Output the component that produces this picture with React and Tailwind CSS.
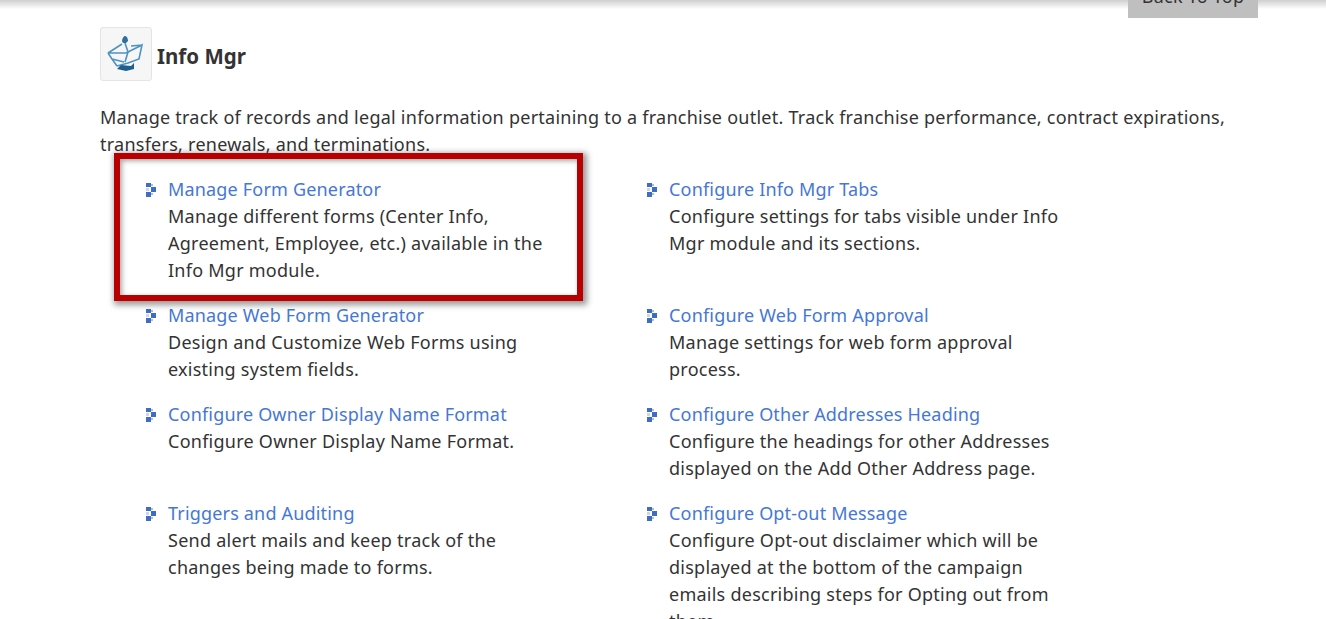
const ITEMS = [
  ["Manage Form Generator", ["Manage different forms (Center Info,", "Agreement, Employee, etc.) available in the", "Info Mgr module."]],
  ["Configure Info Mgr Tabs", ["Configure settings for tabs visible under Info", "Mgr module and its sections."]],
  ["Manage Web Form Generator", ["Design and Customize Web Forms using", "existing system fields."]],
  ["Configure Web Form Approval", ["Manage settings for web form approval", "process."]],
  ["Configure Owner Display Name Format", ["Configure Owner Display Name Format."]],
  ["Configure Other Addresses Heading", ["Configure the headings for other Addresses", "displayed on the Add Other Address page."]],
  ["Triggers and Auditing", ["Send alert mails and keep track of the", "changes being made to forms."]],
  ["Configure Opt-out Message", ["Configure Opt-out disclaimer which will be", "displayed at the bottom of the campaign", "emails describing steps for Opting out from", "them."]],
];

function Bullet() {
  return (
    <svg width="11" height="14" viewBox="0 0 11 14" className="mt-[7px] shrink-0">
      <rect x="0" y="0" width="5" height="4" fill="#3f6cc4" />
      <rect x="5" y="4" width="5" height="5" fill="#3f6cc4" />
      <rect x="0" y="9" width="5" height="5" fill="#3f6cc4" />
      <rect x="5" y="1" width="2" height="2" fill="#a9bde6" />
      <rect x="5" y="10" width="2" height="2" fill="#a9bde6" />
      <rect x="0" y="5" width="3" height="3" fill="#c9d6f0" />
    </svg>
  );
}

function InfoIcon() {
  return (
    <svg width="44" height="44" viewBox="0 0 44 44" fill="none">
      <path d="M18 9 C18 6 20 4 21 4 C23 4 24 7 24 9 L22 11 L19 11 Z" fill="#2e6f9e" />
      <path d="M21 11 L24 20 L21 30" stroke="#4f93c0" strokeWidth="1.6" />
      <path d="M4 21 L18 12 M4 21 L8 27 L13 34 M4 21 L22 21 M22 21 L38 13 L35 27 L24 31 L13 34 M27 14 L38 13 M8 27 L20 30" stroke="#4f93c0" strokeWidth="1.6" />
      <path d="M13 37 L17 33 L27 34 L30 31 L30 37 L22 39 Z" fill="#1f5f8e" />
    </svg>
  );
}

export default function App() {
  return (
    <div className="relative h-[619px] overflow-hidden bg-white text-[18px] leading-[27px] tracking-[0.25px] text-[#333]" style={{ fontFamily: '"Noto Sans", sans-serif' }}>
      <div className="h-[9px] bg-gradient-to-b from-[#cfcfcf] to-white" />
      <div className="absolute right-[68px] top-0 flex h-[18px] w-[130px] items-end justify-center overflow-hidden bg-[#bfbfbf] text-[18px] leading-[44px] text-[#333]">
        <span className="whitespace-nowrap">Back To Top</span>
      </div>

      <div className="pl-[100px] pr-[90px] pt-[18px]">
        <div className="flex items-center gap-[5px]">
          <div className="flex h-[54px] w-[52px] items-center justify-center rounded-[3px] border border-[#e4e4e4] bg-[#f6f6f6]">
            <InfoIcon />
          </div>
          <h1 className="mt-[5px] text-[20.5px] font-bold tracking-normal text-[#333]">Info Mgr</h1>
        </div>

        <p className="mt-[23px] mb-[18px]">
          Manage track of records and legal information pertaining to a franchise outlet. Track franchise performance, contract expirations, transfers, renewals, and terminations.
        </p>

        <div className="grid grid-cols-[501px_501px] pl-[46px]">
          {ITEMS.map(([title, lines]) => (
            <div key={title} className="mb-[18px] flex gap-[11px]">
              <Bullet />
              <div>
                <a className="block tracking-[0.18px] text-[#4577d6]">{title}</a>
                {lines.map(line => <div key={line} className="whitespace-nowrap">{line}</div>)}
              </div>
            </div>
          ))}
        </div>
      </div>

      {/* callout drawn over the screenshot */}
      <div className="absolute left-[114px] top-[153px] h-[148px] w-[469px] border-[6px] border-[#b90000] shadow-[2px_2px_6px_2px_rgba(0,0,0,0.4),inset_2px_2px_5px_rgba(0,0,0,0.35)]" />
    </div>
  );
}
